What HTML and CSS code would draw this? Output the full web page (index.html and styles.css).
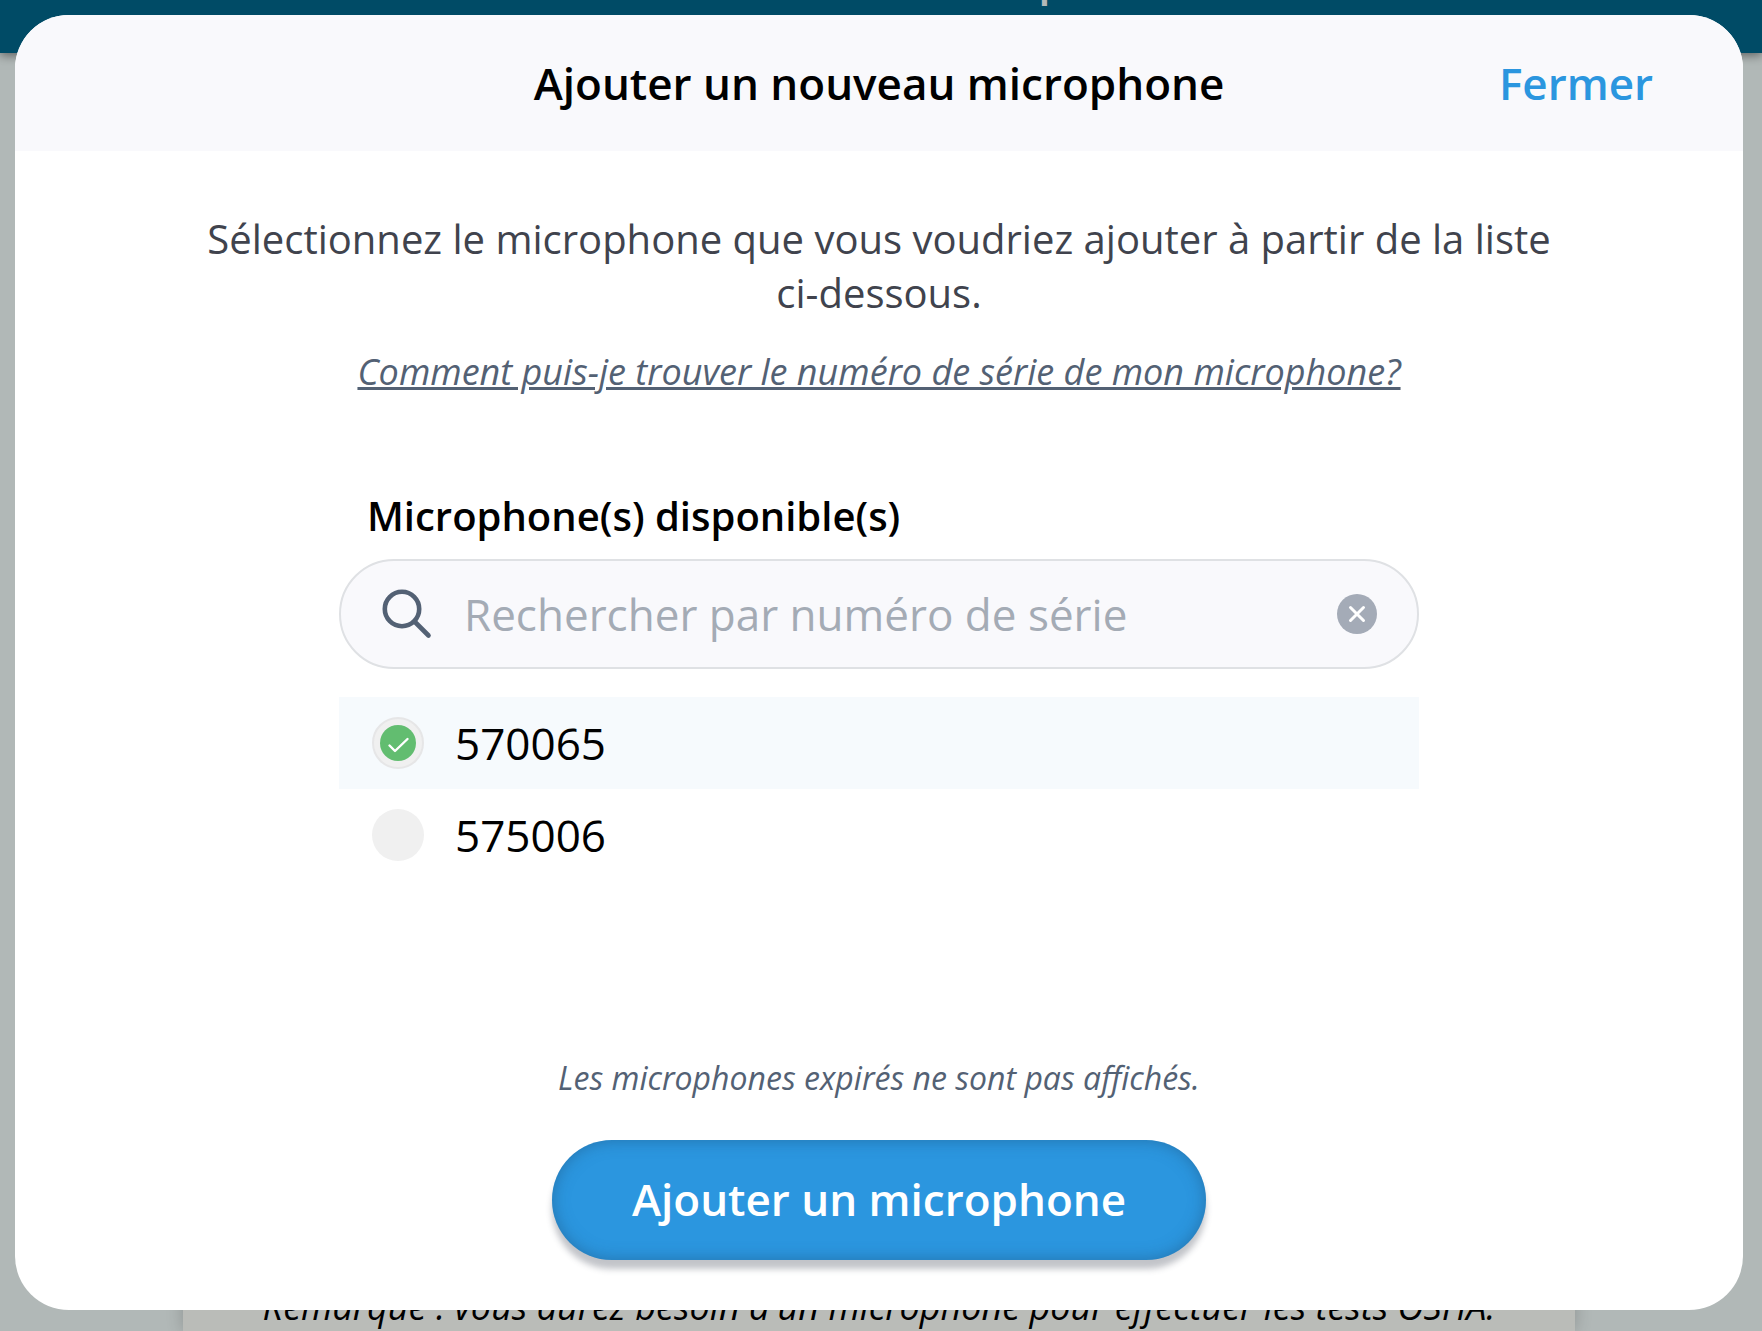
FILE: index.html
```html
<!DOCTYPE html>
<html lang="fr">
<head>
  <meta charset="UTF-8" />
  <meta name="viewport" content="width=device-width, initial-scale=1" />
  <title>Ajouter un nouveau microphone</title>
  <link rel="stylesheet" href="styles.css">
</head>
<body>
  <div class="page">
    <header class="topbar"><span>p</span></header>
    <main class="page-content">
      <div class="card">
        <p>Remarque : vous aurez besoin d'un microphone pour effectuer les tests OSHA.</p>
      </div>
    </main>
  </div>

  <div class="modal" role="dialog" aria-modal="true" aria-labelledby="modal-title">
    <header class="modal-header">
      <h1 id="modal-title">Ajouter un nouveau microphone</h1>
      <button type="button" class="close-btn">Fermer</button>
    </header>

    <div class="modal-body">
      <p class="intro">Sélectionnez le microphone que vous voudriez ajouter à partir de la liste ci-dessous.</p>
      <a class="help-link" href="#">Comment puis-je trouver le numéro de série de mon microphone?</a>

      <form class="picker">
        <label class="picker-title" for="search">Microphone(s) disponible(s)</label>
        <div class="search">
          <svg class="search-icon" viewBox="0 0 50 50" aria-hidden="true">
            <circle cx="20" cy="20" r="17.2" />
            <path d="M32.5 32.5 L46.5 46.5" />
          </svg>
          <input type="text" id="search" placeholder="Rechercher par numéro de série" />
          <button type="button" class="clear-btn" aria-label="Effacer">
            <svg viewBox="0 0 40 40" aria-hidden="true">
              <path d="M13.5 13.5 L26.5 26.5 M26.5 13.5 L13.5 26.5" />
            </svg>
          </button>
        </div>

        <div class="mic-list">
          <label class="mic">
            <input type="radio" name="mic" value="570065" checked />
            <span class="dot">
              <svg viewBox="0 0 36 36" aria-hidden="true"><path d="M9.5 20.5 L15 26 L27.5 14" /></svg>
            </span>
            570065
          </label>
          <label class="mic">
            <input type="radio" name="mic" value="575006" />
            <span class="dot">
              <svg viewBox="0 0 36 36" aria-hidden="true"><path d="M9.5 20.5 L15 26 L27.5 14" /></svg>
            </span>
            575006
          </label>
        </div>
      </form>

      <p class="note">Les microphones expirés ne sont pas affichés.</p>
      <button type="button" class="add-btn">Ajouter un microphone</button>
    </div>
  </div>
</body>
</html>
```

FILE: styles.css
```css
* {
  box-sizing: border-box;
}
body {
  margin: 0;
  font-family: 'Open Sans', 'Noto Sans', sans-serif;
  color: #000;
}
h1, p {
  margin: 0;
}
button, input {
  font-family: inherit;
}
button {
  border: none;
  padding: 0;
  cursor: pointer;
}

/* page behind the dialog */
.page {
  height: 100vh;
  overflow: hidden;
  display: flex;
  flex-direction: column;
  background: #b1b8b7;
}
.topbar {
  display: flex;
  justify-content: center;
  align-items: flex-end;
  flex: none;
  height: 53px;
  padding: 0 0 50px 342px;
  background: #004b66;
  box-shadow: 0 2px 10px rgba(0,0,0,0.5);
  color: #b3b9b8;
  font-size: 44px;
  font-weight: 600;
  line-height: 48px;
}
.page-content {
  flex: 1;
  display: flex;
  align-items: flex-end;
  padding: 0 187px 0 183px;
}
.card {
  flex: 1;
  padding: 40px 0 0;
  background: #babcb8;
  box-shadow: 0 0 16px rgba(0,0,0,0.2);
  text-align: center;
  font-size: 36px;
  font-style: italic;
  line-height: 48px;
  white-space: nowrap;
}

/* dialog */
.modal {
  position: absolute;
  top: 15px;
  right: 19px;
  bottom: 21px;
  left: 15px;
  display: flex;
  flex-direction: column;
  overflow: hidden;
  border-radius: 54px;
  background: #fff;
}
.modal-header {
  display: grid;
  grid-template-columns: 1fr auto 1fr;
  align-items: center;
  padding: 38px 90px;
  background: #f9f9fc;
}
.modal-header h1 {
  grid-column: 2;
  font-size: 44px;
  font-weight: 600;
  line-height: 60px;
}
.close-btn {
  justify-self: end;
  background: none;
  color: #2b96df;
  font-size: 44px;
  font-weight: 600;
  line-height: 60px;
}
.modal-body {
  flex: 1;
  display: flex;
  flex-direction: column;
  align-items: center;
  padding: 61px 170px 50px;
  text-align: center;
}
.intro {
  color: #40434d;
  font-size: 40px;
  line-height: 54px;
}
.help-link {
  margin-top: 28px;
  color: #536174;
  font-size: 36px;
  font-style: italic;
  line-height: 48px;
}
.picker {
  width: 100%;
  max-width: 1080px;
  margin-top: 93px;
  text-align: left;
}
.picker-title {
  display: block;
  padding-left: 28px;
  font-size: 40px;
  font-weight: 600;
  line-height: 54px;
}
.search {
  display: flex;
  align-items: center;
  height: 110px;
  margin-top: 16px;
  padding: 0 40px 0 41px;
  border: 2px solid #dfe1e4;
  border-radius: 55px;
  background: #f9f9fc;
}
.search-icon {
  flex: none;
  width: 50px;
  height: 50px;
  fill: none;
  stroke: #536174;
  stroke-width: 4.6;
  stroke-linecap: round;
}
.search input {
  flex: 1;
  min-width: 0;
  margin: 0 32px;
  padding: 0;
  border: none;
  outline: none;
  background: none;
  color: #000;
  font-size: 44px;
  line-height: 60px;
}
.search input::placeholder {
  color: #a4abb5;
  opacity: 1;
}
.clear-btn {
  flex: none;
  width: 40px;
  height: 40px;
  border-radius: 50%;
  background: #a4abb7;
}
.clear-btn svg {
  display: block;
  fill: none;
  stroke: #fff;
  stroke-width: 3;
  stroke-linecap: round;
}
.mic-list {
  margin-top: 28px;
}
.mic {
  display: flex;
  align-items: center;
  gap: 31px;
  height: 92px;
  padding: 0 33px;
  font-size: 44px;
  line-height: 60px;
  cursor: pointer;
}
.mic:has(input:checked) {
  background: #f6fafd;
}
.mic input {
  position: absolute;
  opacity: 0;
}
.dot {
  display: flex;
  align-items: center;
  justify-content: center;
  width: 52px;
  height: 52px;
  border-radius: 50%;
  background: #f0f0f0;
}
.dot svg {
  display: none;
  width: 36px;
  height: 36px;
  border-radius: 50%;
  background: #62bd70;
  fill: none;
  stroke: #fff;
  stroke-width: 2.4;
  stroke-linecap: round;
  stroke-linejoin: round;
}
.mic input:checked + .dot {
  border: 2px solid #e6e6e7;
}
.mic input:checked + .dot svg {
  display: block;
}
.note {
  margin-top: auto;
  color: #536174;
  font-size: 32px;
  font-style: italic;
  line-height: 44px;
}
.add-btn {
  margin-top: 40px;
  padding: 29px 80px 31px;
  border-radius: 60px;
  background: #2b96df;
  box-shadow: 0 9px 6px rgba(70,75,90,0.33), inset 0 0 16px rgba(30,80,120,0.5);
  color: #fff;
  font-size: 44px;
  font-weight: 600;
  line-height: 60px;
}
```
